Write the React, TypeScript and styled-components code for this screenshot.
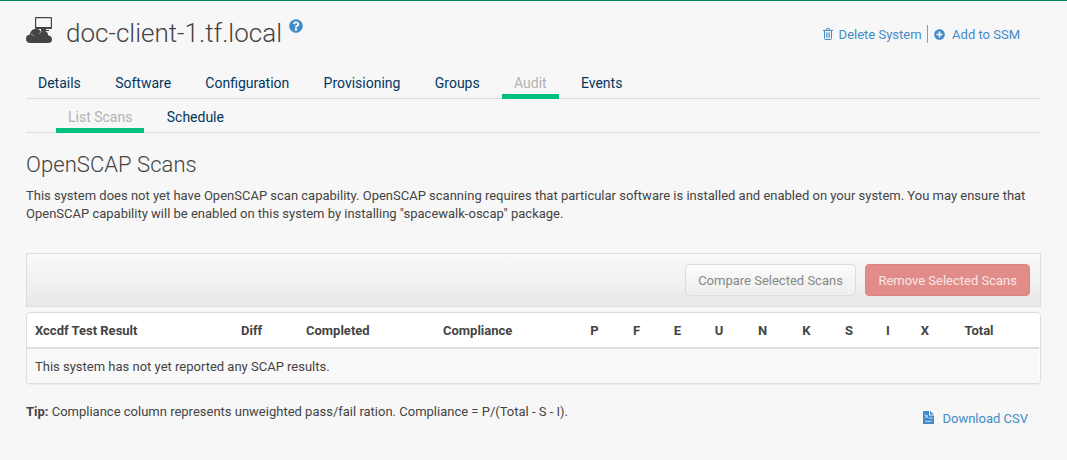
import React from "react";
import styled, { createGlobalStyle } from "styled-components";
import { FaQuestionCircle, FaPlusCircle } from "react-icons/fa";

const GlobalStyle = createGlobalStyle`
  * { box-sizing: border-box; }
  body {
    margin: 0;
    background: #f7f7f7;
    color: #444;
    font: 13px/18px Roboto, "Liberation Sans", sans-serif;
  }
`;

const Page = styled.main`
  height: 460px;
  padding: 0 26px;
  border-top: 1px solid #00855e;
  overflow: hidden;
`;

const Header = styled.header`
  display: flex;
  justify-content: space-between;
  height: 67px;
`;

const Title = styled.h1`
  display: flex;
  align-items: flex-start;
  margin: 0;
  padding-top: 14px;
  font-size: 26px;
  font-weight: 300;
  line-height: 36px;
  white-space: nowrap;
  & > span { margin-left: 14px; }
`;

const SystemIcon = styled.svg`
  flex: none;
  width: 26px;
  height: 27px;
  margin-top: 1px;
`;

const HelpLink = styled.a`
  display: flex;
  margin: 4px 0 0 7px;
  color: #428bca;
  font-size: 14px;
`;

const Actions = styled.div`
  display: flex;
  align-items: center;
  height: 18px;
  margin: 24px 21px 0 0;
`;

const ActionLink = styled.a<{ $gap: number }>`
  display: flex;
  align-items: center;
  gap: ${(p) => p.$gap}px;
  color: #428bca;
  white-space: nowrap;
`;

const ActionLabel = styled.span`
  padding-top: 1px;
`;

const Divider = styled.span`
  width: 1px;
  height: 18px;
  margin: 0 6px 0 5.5px;
  background: #999;
`;

const Tabs = styled.nav<{ $height: number; $indent?: number }>`
  display: flex;
  gap: 10px;
  height: ${(p) => p.$height}px;
  padding-left: ${(p) => p.$indent ?? 0}px;
  border-bottom: 1px solid #ddd;
`;

const Tab = styled.a<{ $active?: boolean; $top?: number }>`
  height: calc(100% + 1px);
  padding: ${(p) => p.$top ?? 5}px 12px 0;
  margin-right: 0.3px;
  font-size: 14px;
  line-height: 20px;
  color: ${(p) => (p.$active ? "#b2b2b2" : "#02365e")};
  border-bottom: ${(p) => (p.$active ? "5px solid #00c081" : "0")};
`;

const SectionTitle = styled.h2`
  margin: 17px 0 0;
  font-size: 22px;
  font-weight: 300;
  line-height: 30px;
  letter-spacing: 0.06px;
`;

const Intro = styled.p`
  margin: 7px 0 30px;
`;

const Toolbar = styled.div`
  display: flex;
  justify-content: flex-end;
  gap: 9px;
  height: 54px;
  padding: 10px;
  border: 1px solid #ddd;
  background: linear-gradient(#fafafa, #e8e8e8);
`;

const Button = styled.button<{ $danger?: boolean }>`
  height: 32px;
  padding: 2px ${(p) => (p.$danger ? 12 : 12.5)}px 0 12px;
  border: 1px solid ${(p) => (p.$danger ? "#e08380" : "#ddd")};
  border-radius: 4px;
  background: ${(p) => (p.$danger ? "#e28c89" : "linear-gradient(#fbfbfb, #eee)")};
  color: ${(p) => (p.$danger ? "#f9e7e6" : "#888")};
  font: inherit;
  white-space: nowrap;
`;

const Panel = styled.section`
  height: 72px;
  margin-top: 5px;
  padding-right: 1px;
  border: 1px solid #ddd;
  border-radius: 4px;
  background: #fff;
  box-shadow: 0 1px 1px rgba(0, 0, 0, 0.05);
`;

const Table = styled.table`
  width: 100%;
  table-layout: fixed;
  border-collapse: separate;
  border-spacing: 0;
`;

const HeadCell = styled.th<{ $center?: boolean }>`
  height: 36px;
  padding: 2px 8px 0;
  border-bottom: 2px solid #ddd;
  text-align: ${(p) => (p.$center ? "center" : "left")};
  white-space: nowrap;
`;

const EmptyCell = styled.td`
  height: 34px;
  padding: 1px 8px 0;
  background: #f9f9f9;
  border-radius: 0 0 0 3px;
`;

const Footer = styled.footer`
  display: flex;
  justify-content: space-between;
  padding: 19px 13px 0 0;
`;

const Download = styled.div`
  margin-top: 7px;
  & svg { margin-bottom: 4px; }
`;

const columns = [
  { label: "Xccdf Test Result", width: 206 },
  { label: "Diff", width: 65 },
  { label: "Completed", width: 137 },
  { label: "Compliance", width: 138 },
  { label: "P", width: 43, center: true },
  { label: "F", width: 41, center: true },
  { label: "E", width: 41, center: true },
  { label: "U", width: 42, center: true },
  { label: "N", width: 45, center: true },
  { label: "K", width: 43, center: true },
  { label: "S", width: 42, center: true },
  { label: "I", width: 36, center: true },
  { label: "X", width: 38, center: true },
  { label: "Total", width: 70, center: true },
  { label: "", width: 25 },
];

const TrashIcon = () => (
  <svg width="10" height="12" viewBox="0 0 10 12" fill="none" stroke="#428bca">
    <path d="M0 2.5h10M3.3 2.3V1.2Q3.3.6 4 .6h2q.7 0 .7.6v1.1M1.5 2.5v8q0 1 1 1h5q1 0 1-1v-8" />
    <path d="M3.5 4.3v5.5M5 4.3v5.5M6.5 4.3v5.5" strokeWidth=".8" />
  </svg>
);

const CsvIcon = () => (
  <svg width="11" height="13" viewBox="0 0 11 13">
    <path fill="#428bca" d="M.5 0H6v4.500h5v8q0 .5-.5.5H.5Q0 13 0 12.500V.5Q0 0 .5 0zM7 0l4 3.600H7z" />
    <path fill="none" stroke="#f7f7f7" strokeWidth=".8" d="M1.500 4h1.500l2 3M4.800 4.500l-3 2.500M6 7h3.500" />
    <path fill="none" stroke="#cfe1f1" strokeWidth="1.300" strokeDasharray="1.500 .6" d="M2.500 10.300h6.500" />
  </svg>
);

export default function App() {
  return (
    <Page>
      <GlobalStyle />
      <Header>
        <Title>
          <SystemIcon viewBox="0 0 26 27" fill="#444">
            <path fillRule="evenodd" d="M10 1h15q1 0 1 1v10q0 1-1 1H10Q9 13 9 12V2Q9 1 10 1zm.2 1.200v8.800h14.600V2.200z" />
            <path d="M15 13h5v1h3v1h-8z" />
            <path d="M4.500 27Q0 27 0 22.700q0-3.700 4-4.200.3-4 3.700-5.200 4.800-1.500 7.300 2.200 3-1.500 5.500.3 1.800 1.400 1.500 3.500 4 .8 4 4.200 0 3.500-4 3.500z" />
            <path fill="none" stroke="#f7f7f7" strokeWidth=".6" strokeOpacity=".75" d="M5 18.500q2 .1 3.200 1.500M15.300 15.400q-1.600 1-1.800 2.500" />
          </SystemIcon>
          <span>doc-client-1.tf.local</span>
          <HelpLink><FaQuestionCircle /></HelpLink>
        </Title>
        <Actions>
          <ActionLink $gap={6}><TrashIcon /><ActionLabel>Delete System</ActionLabel></ActionLink>
          <Divider />
          <ActionLink $gap={7}><FaPlusCircle size={11} /><ActionLabel>Add to SSM</ActionLabel></ActionLink>
        </Actions>
      </Header>
      <Tabs $height={31}>
        <Tab>Details</Tab>
        <Tab>Software</Tab>
        <Tab>Configuration</Tab>
        <Tab>Provisioning</Tab>
        <Tab>Groups</Tab>
        <Tab $active>Audit</Tab>
        <Tab>Events</Tab>
      </Tabs>
      <Tabs $height={34} $indent={30}>
        <Tab $active $top={8}>List Scans</Tab>
        <Tab $top={8}>Schedule</Tab>
      </Tabs>
      <SectionTitle>OpenSCAP Scans</SectionTitle>
      <Intro>
        This system does not yet have OpenSCAP scan capability. OpenSCAP scanning requires that particular software is installed and enabled on your system. You may ensure that OpenSCAP capability will be enabled on this system by installing "spacewalk-oscap" package.
      </Intro>
      <Toolbar>
        <Button>Compare Selected Scans</Button>
        <Button $danger>Remove Selected Scans</Button>
      </Toolbar>
      <Panel>
        <Table>
          <colgroup>
            {columns.map((c) => <col key={c.label} width={c.width} />)}
          </colgroup>
          <thead>
            <tr>{columns.map((c) => <HeadCell key={c.label} $center={c.center}>{c.label}</HeadCell>)}</tr>
          </thead>
          <tbody>
            <tr><EmptyCell colSpan={columns.length}>This system has not yet reported any SCAP results.</EmptyCell></tr>
          </tbody>
        </Table>
      </Panel>
      <Footer>
        <div><strong>Tip:</strong> Compliance column represents unweighted pass/fail ration. Compliance = P/(Total - S - I).</div>
        <Download><ActionLink $gap={8}><CsvIcon />Download CSV</ActionLink></Download>
      </Footer>
    </Page>
  );
}
